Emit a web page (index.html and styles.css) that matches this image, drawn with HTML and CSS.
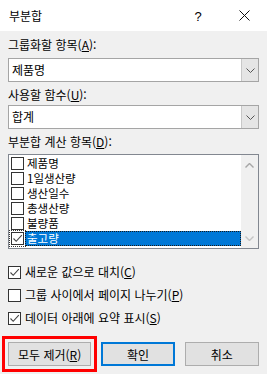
FILE: index.html
```html
<!DOCTYPE html>
<html lang="ko">
<head>
  <meta charset="UTF-8" />
  <title>부분합</title>
  <link rel="stylesheet" href="styles.css">
</head>
<body>
  <div class="dialog">
    <div class="titlebar">
      <span class="title">부분합</span>
      <span class="tb-btn help">?</span>
      <span class="tb-btn close">
        <svg width="11" height="11" viewBox="0 0 11 11"><path d="M0.5 0.5 L10.5 10.5 M10.5 0.5 L0.5 10.5" stroke="#111" stroke-width="1"/></svg>
      </span>
    </div>

    <div class="content">
      <div class="label l1">그룹화할 항목(<u>A</u>):</div>
      <div class="combo c1">
        <span class="combo-text">제품명</span>
        <span class="combo-btn">
          <svg width="9" height="5" viewBox="0 0 9 5"><path d="M0.5 0.5 L4.5 4.5 L8.5 0.5" fill="none" stroke="#555" stroke-width="1"/></svg>
        </span>
      </div>

      <div class="label l2">사용할 함수(<u>U</u>):</div>
      <div class="combo c2">
        <span class="combo-text">합계</span>
        <span class="combo-btn">
          <svg width="9" height="5" viewBox="0 0 9 5"><path d="M0.5 0.5 L4.5 4.5 L8.5 0.5" fill="none" stroke="#555" stroke-width="1"/></svg>
        </span>
      </div>

      <div class="label l3">부분합 계산 항목(<u>D</u>):</div>
      <div class="listbox">
        <div class="items">
          <div class="item"><span class="box"></span><span class="item-text">제품명</span></div>
          <div class="item"><span class="box"></span><span class="item-text">1일생산량</span></div>
          <div class="item"><span class="box"></span><span class="item-text">생산일수</span></div>
          <div class="item"><span class="box"></span><span class="item-text">총생산량</span></div>
          <div class="item"><span class="box"></span><span class="item-text">불량품</span></div>
          <div class="item selected">
            <span class="box checked"><svg width="11" height="11" viewBox="0 0 11 11"><path d="M1.5 5.5 L4.2 8.3 L9.8 2.2" fill="none" stroke="#444" stroke-width="1.1"/></svg></span>
            <span class="item-text">출고량</span>
          </div>
        </div>
        <div class="scroll">
          <svg width="9" height="5" viewBox="0 0 9 5"><path d="M0.5 4.5 L4.5 0.5 L8.5 4.5" fill="none" stroke="#a6a6a6" stroke-width="1.4"/></svg>
          <svg width="9" height="5" viewBox="0 0 9 5"><path d="M0.5 0.5 L4.5 4.5 L8.5 0.5" fill="none" stroke="#c4c4c4" stroke-width="1.4"/></svg>
        </div>
      </div>

      <div class="options">
        <div class="opt">
          <span class="box checked"><svg width="11" height="11" viewBox="0 0 11 11"><path d="M1.5 5.5 L4.2 8.3 L9.8 2.2" fill="none" stroke="#444" stroke-width="1.1"/></svg></span>
          <span>새로운 값으로 대치(<u>C</u>)</span>
        </div>
        <div class="opt">
          <span class="box"></span>
          <span>그룹 사이에서 페이지 나누기(<u>P</u>)</span>
        </div>
        <div class="opt">
          <span class="box checked"><svg width="11" height="11" viewBox="0 0 11 11"><path d="M1.5 5.5 L4.2 8.3 L9.8 2.2" fill="none" stroke="#444" stroke-width="1.1"/></svg></span>
          <span>데이터 아래에 요약 표시(<u>S</u>)</span>
        </div>
      </div>

      <div class="buttons">
        <button class="btn remove">모두 제거(<u>R</u>)</button>
        <button class="btn ok">확인</button>
        <button class="btn cancel">취소</button>
      </div>
    </div>
  </div>
</body>
</html>
```

FILE: styles.css
```css
body {
  margin: 0;
  font-family: "Noto Sans CJK KR", "Noto Sans", sans-serif;
  font-size: 12px;
  color: #000;
  background-color: #f0f0f0;
}

.dialog {
  width: 267px;
  height: 374px;
  background-color: #f0f0f0;
  overflow: hidden;
}

.titlebar {
  height: 31px;
  background-color: #fff;
  display: flex;
  align-items: center;
}

.title {
  padding-left: 9px;
  font-size: 12px;
  flex: 1;
}

.tb-btn {
  width: 46px;
  height: 31px;
  display: flex;
  align-items: center;
  justify-content: center;
}

.help {
  font-family: "Liberation Sans", sans-serif;
  font-size: 13px;
  padding-top: 1px;
}

.content {
  padding: 6px 8px 0 8px;
}

.label {
  line-height: 16px;
  height: 16px;
}

.l2 { margin-top: 5px; }
.l3 { margin-top: 5px; }

.combo {
  height: 22px;
  border: 1px solid #a5a5a5;
  background-color: #fff;
  display: flex;
}

.c1 { margin-top: 5px; }
.c2 { margin-top: 2px; }

.combo-text {
  flex: 1;
  padding-left: 3px;
  line-height: 22px;
}

.combo-btn {
  width: 16px;
  background-color: #e5e5e5;
  border-left: 1px solid #c8c8c8;
  display: flex;
  align-items: center;
  justify-content: center;
}

.listbox {
  margin-top: 4px;
  height: 93px;
  border: 1px solid #828790;
  background-color: #fff;
  display: flex;
}

.items {
  flex: 1;
  padding: 1px 0 0 2px;
}

.item {
  height: 15px;
  display: flex;
  align-items: center;
}

.item .box {
  margin-right: 1px;
}

.item-text {
  display: block;
  height: 15px;
  line-height: 15px;
  font-size: 11.5px;
  padding-left: 2px;
  flex: 1;
  overflow: hidden;
}

.item.selected .item-text {
  background-color: #0078d7;
  color: #fff;
  outline: 1px dotted #1a1a1a;
  outline-offset: -1px;
}

.item.selected .box {
  outline: 1px dotted #333;
  outline-offset: 1px;
}

.scroll {
  width: 17px;
  background-color: #f0f0f0;
  display: flex;
  flex-direction: column;
  align-items: center;
  justify-content: space-between;
  padding: 8px 0 7px 0;
}

.box {
  width: 11px;
  height: 11px;
  border: 1px solid #333;
  background-color: #fff;
  display: flex;
  align-items: center;
  justify-content: center;
  flex-shrink: 0;
}

.options {
  margin-top: 15px;
  display: flex;
  flex-direction: column;
  gap: 7px;
}

.opt {
  display: flex;
  align-items: center;
  gap: 4px;
  height: 16px;
  line-height: 16px;
}

.buttons {
  margin-top: 16px;
  display: flex;
}

.btn {
  height: 24px;
  font-family: "Noto Sans CJK KR", "Noto Sans", sans-serif;
  font-size: 12px;
  background-color: #e1e1e1;
  border: 1px solid #adadad;
  color: #000;
  padding: 0;
}

.remove {
  width: 84px;
  outline: 3px solid #ff0000;
  outline-offset: 3px;
}

.ok {
  width: 74px;
  margin-left: 10px;
  border: 2px solid #0078d7;
}

.cancel {
  width: 75px;
  margin-left: 10px;
}
```
